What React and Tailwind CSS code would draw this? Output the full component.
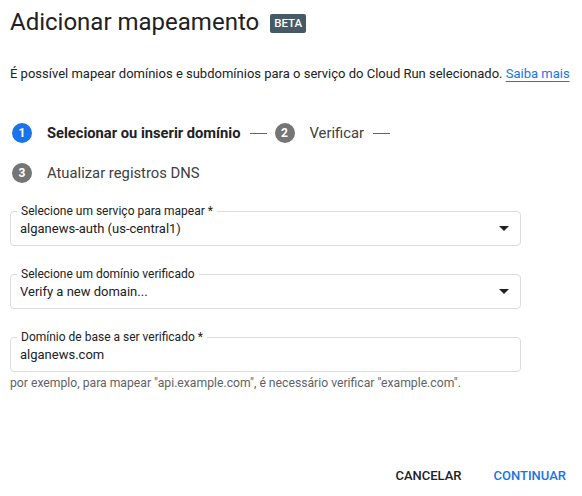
import React from 'react';

const steps = [
  { n: 1, label: 'Selecionar ou inserir domínio', active: true, dash: true },
  { n: 2, label: 'Verificar', active: false, dash: true },
  { n: 3, label: 'Atualizar registros DNS', active: false, dash: false },
];

const Arrow = () => (
  <svg width="10" height="5" viewBox="0 0 10 5" className="shrink-0">
    <path d="M0 0h10L5 5z" fill="#202124" />
  </svg>
);

const Field = ({ label, value, select }) => (
  <div className="relative h-[35px] w-[511px] rounded-[4px] border border-[#dadce0] flex items-center pl-[9px] pr-[11px]">
    <span className="absolute left-[6px] top-[-8px] bg-white px-[4px] text-[12px] leading-[14px] text-[#202124]">
      {label}
    </span>
    <span className="flex-1 text-[13px] text-[#202124]">{value}</span>
    {select && <Arrow />}
  </div>
);

export default function App() {
  return (
    <div className="w-[582px] h-[496px] bg-white font-['Roboto',sans-serif] text-[#202124] relative">
      <div className="pl-[10px]">
        {/* cabeçalho */}
        <div className="flex items-center gap-[11px] pt-[8px]">
          <h1 className="text-[24px] leading-[28px] font-normal">Adicionar mapeamento</h1>
          <span className="bg-[#455a64] text-white text-[11.5px] font-medium leading-[19px] px-[4px] rounded-[2px] mt-[2px]">BETA</span>
        </div>

        <p className="mt-[28px] text-[13px] leading-[20px] text-[#202124]">
          É possível mapear domínios e subdomínios para o serviço do Cloud Run selecionado.{' '}
          <a href="#" className="text-[#1a73e8] underline underline-offset-[3px]">Saiba mais</a>
        </p>

        {/* passos */}
        <div className="mt-[39px] w-[511px] flex flex-wrap items-center gap-y-[20px]">
          {steps.map((s) => (
            <div key={s.n} className="flex items-center h-[20px] pl-[2px]">
              <span
                className={`w-[20px] h-[20px] rounded-full flex items-center justify-center text-white text-[12px] font-bold ${
                  s.active ? 'bg-[#1a73e8]' : 'bg-[#757575]'
                }`}
              >
                {s.n}
              </span>
              <span className={`ml-[15px] ${s.active ? 'text-[14.7px] font-bold text-[#202124]' : 'text-[14.8px] text-[#3c4043]'}`}>
                {s.label}
              </span>
              {s.dash && <span className="ml-[9px] mr-[6px] w-[17px] h-px bg-[#5f6368]" />}
            </div>
          ))}
        </div>

        {/* campos */}
        <div className="mt-[28px] flex flex-col gap-[28px]">
          <Field label="Selecione um serviço para mapear *" value="alganews-auth (us-central1)" select />
          <Field label="Selecione um domínio verificado" value="Verify a new domain..." select />
          <div>
            <Field label="Domínio de base a ser verificado *" value="alganews.com" />
            <p className="mt-[5px] text-[12.2px] leading-[13px] text-[#5f6368]">
              por exemplo, para mapear "api.example.com", é necessário verificar "example.com".
            </p>
          </div>
        </div>
      </div>

      {/* ações */}
      <div className="absolute bottom-[10px] right-0 flex">
        <button className="px-[16px] h-[20px] text-[13px] font-medium text-[#202124]">CANCELAR</button>
        <button className="px-[16px] h-[20px] text-[13px] font-medium text-[#1a73e8]">CONTINUAR</button>
      </div>
    </div>
  );
}
